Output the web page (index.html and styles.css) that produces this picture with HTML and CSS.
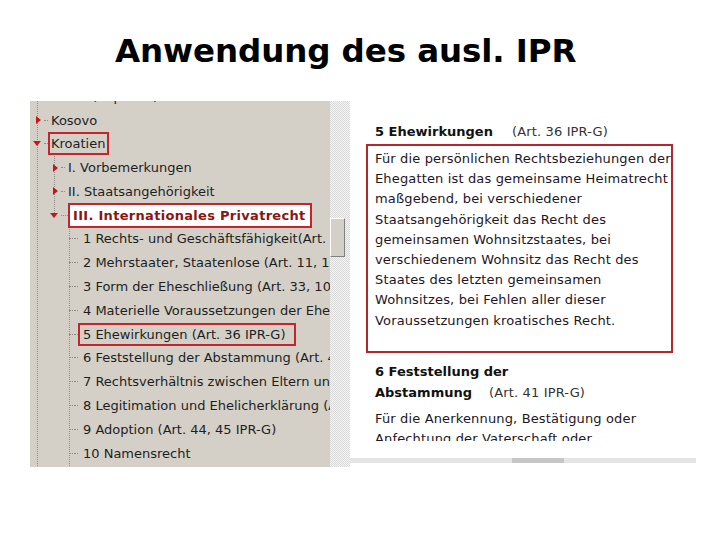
FILE: index.html
```html
<!DOCTYPE html>
<html lang="de">
<head>
<meta charset="utf-8">
<title>Anwendung des ausl. IPR</title>
<link rel="stylesheet" href="styles.css">
</head>
<body>
<h1 class="title">Anwendung des ausl. IPR</h1>
<div class="window">
  <div class="tree">
    <div class="rows">
      <div class="row l1"><span class="tw r"></span><span class="cn"></span><span class="lb">Korea (Republik)</span></div>
      <div class="row l1"><span class="tw r"></span><span class="cn"></span><span class="lb">Kosovo</span></div>
      <div class="row l1"><span class="tw d"></span><span class="cn"></span><span class="lb boxed">Kroatien</span></div>
      <div class="row l2"><span class="tw r"></span><span class="cn"></span><span class="lb">I. Vorbemerkungen</span></div>
      <div class="row l2"><span class="tw r"></span><span class="cn"></span><span class="lb">II. Staatsangehörigkeit</span></div>
      <div class="row l2"><span class="tw d"></span><span class="cn wide"></span><span class="lb sel">III. Internationales Privatrecht</span></div>
      <div class="row l3"><span class="tw n"></span><span class="cn"></span><span class="lb">1 Rechts- und Geschäftsfähigkeit(Art. 14 IPR-G)</span></div>
      <div class="row l3"><span class="tw n"></span><span class="cn"></span><span class="lb">2 Mehrstaater, Staatenlose (Art. 11, 12 IPR-G)</span></div>
      <div class="row l3"><span class="tw n"></span><span class="cn"></span><span class="lb">3 Form der Eheschließung (Art. 33, 102 IPR-G)</span></div>
      <div class="row l3"><span class="tw n"></span><span class="cn"></span><span class="lb">4 Materielle Voraussetzungen der Eheschließung</span></div>
      <div class="row l3"><span class="tw n"></span><span class="cn"></span><span class="lb boxed5">5 Ehewirkungen (Art. 36 IPR-G)</span></div>
      <div class="row l3"><span class="tw n"></span><span class="cn"></span><span class="lb">6 Feststellung der Abstammung (Art. 41 IPR-G)</span></div>
      <div class="row l3"><span class="tw n"></span><span class="cn"></span><span class="lb">7 Rechtsverhältnis zwischen Eltern und Kindern</span></div>
      <div class="row l3"><span class="tw n"></span><span class="cn"></span><span class="lb">8 Legitimation und Ehelicherklärung (Art. 42 IPR-G)</span></div>
      <div class="row l3"><span class="tw n"></span><span class="cn"></span><span class="lb">9 Adoption (Art. 44, 45 IPR-G)</span></div>
      <div class="row l3"><span class="tw n"></span><span class="cn"></span><span class="lb">10 Namensrecht</span></div>
    </div>
  </div>
  <div class="vscroll"><div class="thumb"></div></div>
  <div class="content">
    <div class="view">
      <div class="h">5 Ehewirkungen<span class="art">(Art. 36 IPR-G)</span></div>
      <div class="redbox">
        <p class="txt">Für die persönlichen Rechtsbeziehungen der<br>Ehegatten ist das gemeinsame Heimatrecht<br>maßgebend, bei verschiedener<br>Staatsangehörigkeit das Recht des<br>gemeinsamen Wohnsitzstaates, bei<br>verschiedenem Wohnsitz das Recht des<br>Staates des letzten gemeinsamen<br>Wohnsitzes, bei Fehlen aller dieser<br>Voraussetzungen kroatisches Recht.</p>
      </div>
      <div class="h h6">6 Feststellung der<br>Abstammung<span class="art a2">(Art. 41 IPR-G)</span></div>
      <p class="txt t2">Für die Anerkennung, Bestätigung oder<br>Anfechtung der Vaterschaft oder<br>Mutterschaft ist das Recht</p>
    </div>
    <div class="hbar"><div class="hthumb"></div></div>
  </div>
</div>
</body>
</html>
```

FILE: styles.css
```css
html, body {
  margin: 0;
  padding: 0;
  background: #fff;
}
body {
  width: 720px;
  height: 540px;
  overflow: hidden;
  font-family: "DejaVu Sans", Verdana, sans-serif;
}
.title {
  margin: 31px 0 0 0;
  padding-left: 115px;
  font-size: 32.5px;
  line-height: 41px;
  font-weight: bold;
  color: #000;
  letter-spacing: -0.1px;
}
.window {
  display: flex;
  margin-top: 29px;
  margin-left: 30px;
}
.tree {
  width: 300px;
  height: 366px;
  overflow: hidden;
  background-color: #d4d0c8;
  background-image:
    repeating-linear-gradient(to bottom, #8f8c86 0 1px, transparent 1px 2px),
    repeating-linear-gradient(to bottom, #8f8c86 0 1px, transparent 1px 2px),
    repeating-linear-gradient(to bottom, #8f8c86 0 1px, transparent 1px 2px);
  background-size: 1px 100%, 1px 60px, 1px 100%;
  background-position: 7px 0, 24px 55px, 39px 128px;
  background-repeat: no-repeat;
}
.rows {
  margin-top: -16.7px;
}
.row {
  display: flex;
  align-items: center;
  height: 23.8px;
  white-space: nowrap;
  font-size: 13px;
  color: #1e1e1e;
}
.l1 { padding-left: 0; }
.l2 { padding-left: 17px; }
.l3 { padding-left: 34px; }
.tw {
  flex: none;
  width: 14px;
  height: 14px;
  display: flex;
  align-items: center;
  justify-content: center;
}
.l3 .tw { width: 11px; justify-content: flex-end; }
.tw.r::before {
  content: "";
  width: 0;
  height: 0;
  border-left: 5px solid #c8141e;
  border-top: 4.5px solid transparent;
  border-bottom: 4.5px solid transparent;
  margin-left: 2px;
}
.tw.d::before {
  content: "";
  width: 0;
  height: 0;
  border-top: 5px solid #c8141e;
  border-left: 4.5px solid transparent;
  border-right: 4.5px solid transparent;
}
.tw.n::before {
  content: "";
  width: 6px;
  border-top: 1px dotted #8f8c86;
}
.cn {
  flex: none;
  width: 4px;
  border-top: 1px dotted #8f8c86;
}
.l3 .cn { width: 3px; }
.cn.wide { width: 7px; }
.lb {
  border: 2px solid transparent;
  padding: 0 2px 0 1px;
  line-height: 19px;
}
.l3 .lb { padding-left: 3px; }
.lb.boxed { border-color: #c0262c; }
.lb.boxed5 { border-color: #c0262c; padding-right: 8px; }
.lb.sel {
  background: #fff;
  border-color: #c0262c;
  color: #8e1414;
  font-weight: bold;
  padding: 1px 4px 1px 3px;
  letter-spacing: 0.3px;
}
.vscroll {
  width: 20px;
  height: 366px;
  background-color: #ececec;
  background-image: repeating-conic-gradient(#d8d8d8 0 25%, #f6f6f6 0 50%);
  background-size: 2px 2px;
}
.thumb {
  width: 13px;
  height: 37px;
  margin-top: 117px;
  background: #d4d0c8;
  border-top: 1px solid #fff;
  border-left: 1px solid #fff;
  border-right: 1px solid #808080;
  border-bottom: 1px solid #808080;
}
.content {
  width: 346px;
  display: flex;
  flex-direction: column;
}
.view {
  height: 340px;
  overflow: hidden;
  padding-left: 25px;
  padding-top: 21px;
  box-sizing: border-box;
}
.h {
  font-size: 13px;
  font-weight: bold;
  line-height: 20px;
  color: #111;
  white-space: nowrap;
}
.art {
  font-weight: normal;
  color: #333;
  margin-left: 19px;
  letter-spacing: 0.15px;
}
.a2 { margin-left: 17px; }
.h6 {
  line-height: 21px;
  margin-top: 8px;
}
.redbox {
  margin: 2px 0 0 -9px;
  width: 307px;
  height: 209px;
  box-sizing: border-box;
  border: 2px solid #b5262e;
  padding: 3px 0 0 7px;
}
.txt {
  margin: 0;
  font-size: 13px;
  line-height: 20.2px;
  letter-spacing: 0.15px;
  color: #24161f;
  white-space: nowrap;
}
.t2 { margin-top: 6px; }
.hbar {
  margin-top: 17px;
  height: 5px;
  background: #e4e4e4;
}
.hthumb {
  width: 52px;
  height: 5px;
  margin-left: 162px;
  background: #c6c6c6;
}
```
